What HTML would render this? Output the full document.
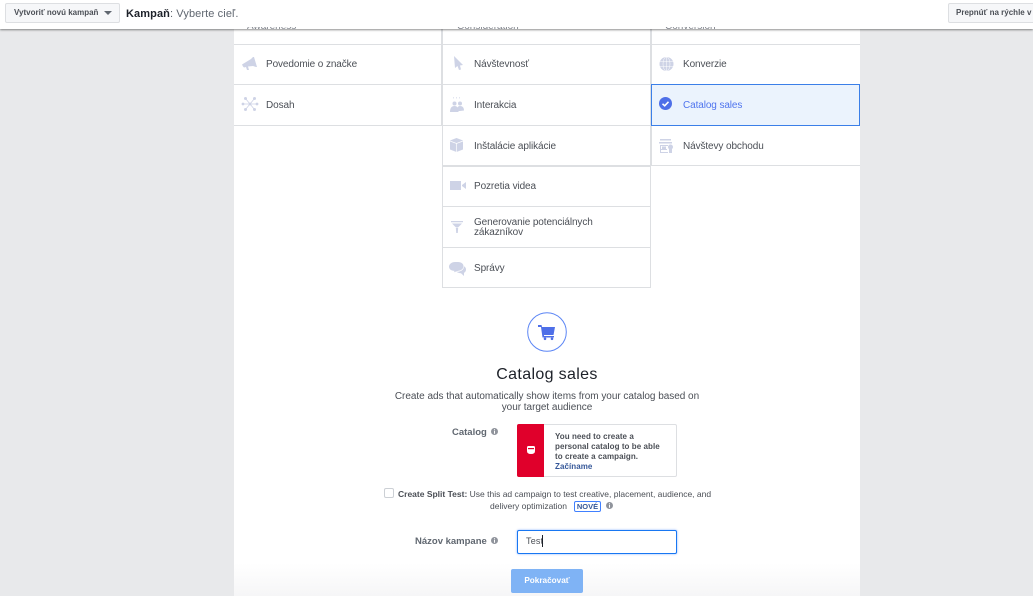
<!DOCTYPE html>
<html><head><meta charset="utf-8">
<style>
html,body{margin:0;padding:0;width:1033px;height:596px;overflow:hidden;background:#e8e9eb;font-family:"Liberation Sans",sans-serif;color:#4b4f56}
.a{position:absolute}
.t{position:absolute;font-size:10px;line-height:10px;letter-spacing:-.1px;color:#4b4f56;white-space:nowrap}
.h{position:absolute;background:#dddfe2;height:1px}
.v{position:absolute;background:#dddfe2;width:1px}
svg{position:absolute;overflow:visible}
</style></head><body>
<div class="a" style="left:234px;top:0;width:626px;height:596px;background:#fff"></div>
<div class="a" style="left:234px;top:563px;width:626px;height:33px;background:linear-gradient(#fff,#f6f6f7)"></div>

<!-- grid lines -->
<div class="h" style="left:234px;top:44px;width:626px"></div>
<div class="h" style="left:234px;top:84px;width:417px"></div>
<div class="h" style="left:234px;top:125px;width:417px"></div>
<div class="h" style="left:442px;top:165px;width:209px;height:2px"></div>
<div class="h" style="left:442px;top:206px;width:209px"></div>
<div class="h" style="left:442px;top:247px;width:209px"></div>
<div class="h" style="left:442px;top:287px;width:209px"></div>
<div class="h" style="left:651px;top:165px;width:209px"></div>
<div class="v" style="left:441px;top:29px;height:97px;width:2px"></div>
<div class="v" style="left:442px;top:126px;height:162px"></div>
<div class="v" style="left:650px;top:29px;height:137px;width:2px"></div>
<div class="v" style="left:650px;top:166px;height:122px"></div>

<!-- selected -->
<div class="a" style="left:651px;top:84px;width:207px;height:40px;background:#ebf3fd;border:1px solid #3b7fe8"></div>

<!-- labels -->
<div class="t" style="left:266px;top:60px">Povedomie o značke</div>
<div class="t" style="left:266px;top:101px">Dosah</div>
<div class="t" style="left:474px;top:60px">Návštevnosť</div>
<div class="t" style="left:474px;top:101px">Interakcia</div>
<div class="t" style="left:474px;top:142px">Inštalácie aplikácie</div>
<div class="t" style="left:474px;top:182px">Pozretia videa</div>
<div class="t" style="left:474px;top:218px">Generovanie potenciálnych<br>zákazníkov</div>
<div class="t" style="left:474px;top:264px">Správy</div>
<div class="t" style="left:683px;top:60px">Konverzie</div>
<div class="t" style="left:683px;top:101px;color:#4f74ee">Catalog sales</div>
<div class="t" style="left:683px;top:142px">Návštevy obchodu</div>

<!-- icons -->
<svg style="left:242px;top:57px" width="15" height="14" fill="#ced3e6"><path d="M0 7.500L9 2l2-2h1l3 10h-1l-3-1-5 .5 1 3.500H5L4 10l-2 .5-1-1z"/></svg>
<svg style="left:242px;top:96px" width="16" height="16" fill="#ced3e6" stroke="#ced3e6" stroke-width=".8"><path fill="none" d="M8 8L3.500 2.500M8 8l4.500-5.500M8 8L3.500 13.500M8 8l4.500 5.500M1 8h14"/><circle cx="3.500" cy="2.500" r="1.100"/><circle cx="12.500" cy="2.500" r="1.100"/><circle cx="3.500" cy="13.500" r="1.100"/><circle cx="12.500" cy="13.500" r="1.100"/><circle cx="1" cy="8" r="1"/><circle cx="15" cy="8" r="1"/><circle cx="8" cy="8" r="1"/></svg>
<svg style="left:454px;top:56px" width="9" height="14" fill="#ced3e6"><path d="M0 0L9 9l-3 .5L7 13.500l-2 .5-1.500-4L1 12z"/></svg>
<svg style="left:450px;top:97px" width="14" height="15" fill="#ced3e6"><circle cx="4.500" cy="6.500" r="2"/><circle cx="10" cy="6.500" r="2"/><path d="M0 15c0-4 1.500-6 4.500-6 1.500 0 2.500.5 3 1.500.5-1 1.200-1.500 2.500-1.500 2.500 0 4 1.500 4 4.500l-4 .5H8.500v1z"/><path d="M3 0h1v1.500H3zM6 0h1v1.500H6zM9 0h1v1.500H9z" opacity=".6"/></svg>
<svg style="left:450px;top:138px" width="13" height="14"><path d="M6.500 0L13 2.500v9L6.500 14 0 11.500v-9z" fill="#ced3e6"/><path d="M0 3l6.500 2.500L13 3M6.500 5.500V14" stroke="#fff" stroke-width=".7" fill="none"/></svg>
<svg style="left:450px;top:181px" width="16" height="9" fill="#ced3e6"><rect width="11" height="9"/><path d="M12 4l4-3v7l-4-3z"/></svg>
<svg style="left:451px;top:221px" width="12" height="12" fill="#ced3e6"><path d="M0 0h12v1.200H0zM1 2.500h10L7.500 6h-3zM4.800 6.500h2.400L6.800 12H5.200z"/></svg>
<svg style="left:449px;top:262px" width="17" height="14" viewBox="0 0 17 15" preserveAspectRatio="none" fill="#ced3e6"><path d="M6 0h3c3.500 0 5.500 2 5.500 4.500S12.500 9 9 9.500L5 11l.5-1.500C2 9.500 0 7.500 0 5S2.500 0 6 0z"/><path d="M15 4.500c1.500 1 2 2 2 3.500 0 2-1 3-2 3.500V15l-3-3c-2 0-3.500-.5-4.500-1.500 4 0 7.500-2 7.500-6z"/></svg>
<svg style="left:659px;top:57px" width="15" height="15"><circle cx="7.500" cy="7" r="7" fill="#ced3e6"/><g stroke="#fff" stroke-width=".5" fill="none"><path d="M0 4.500h15M0 9.500h15M7.500 0v14"/><ellipse cx="7.500" cy="7" rx="3.500" ry="7"/></g></svg>
<svg style="left:659px;top:97px" width="13" height="13"><circle cx="6.500" cy="6.500" r="6.500" fill="#4e6fe8"/><path d="M3.500 6.800l2.200 2 3.800-4" stroke="#fff" stroke-width="1.600" fill="none"/></svg>
<svg style="left:659px;top:139px" width="15" height="14" fill="#ced3e6"><path d="M1 0h11v1.500H1zM0 3h13v1.500H0zM1 6h8v1H2v3h6v1H2v2h7v1H1z"/><rect x="3" y="7.500" width="4" height="2.500"/><circle cx="11.500" cy="8" r="2.500"/><rect x="10" y="10" width="3" height="4"/></svg>

<!-- header -->
<div class="a" style="left:0;top:0;width:1033px;height:29px;background:#fff;box-shadow:0 1px 2px rgba(0,0,0,.45)"></div>
<div class="a" style="left:5px;top:3px;width:113px;height:18px;background:#f6f7f9;border:1px solid #dddfe2;border-radius:2px"></div>
<div class="t" style="left:14px;top:8px;font-size:8px;letter-spacing:0;font-weight:bold;color:#4b4f56">Vytvoriť novú kampaň</div>
<div class="a" style="left:104px;top:11px;width:0;height:0;border-left:4px solid transparent;border-right:4px solid transparent;border-top:4px solid #606770"></div>
<div class="t" style="left:126px;top:8px;font-size:11px;line-height:13px;letter-spacing:.1px;color:#606770"><b style="color:#1d2129">Kampaň</b>: Vyberte cieľ.</div>
<div class="a" style="left:948px;top:3px;width:90px;height:18px;background:#f6f7f9;border:1px solid #dddfe2;border-radius:2px"></div>
<div class="t" style="left:956px;top:8px;font-size:8px;letter-spacing:0;font-weight:bold;color:#4b4f56">Prepnúť na rýchle v</div>

<!-- clipped headings -->
<div class="t" style="left:247px;top:22px;color:#80848c;letter-spacing:0;clip-path:inset(5px 0 0 0)">Awareness</div>
<div class="t" style="left:457px;top:22px;color:#80848c;letter-spacing:0;clip-path:inset(5px 0 0 0)">Consideration</div>
<div class="t" style="left:665px;top:22px;color:#80848c;letter-spacing:0;clip-path:inset(5px 0 0 0)">Conversion</div>

<!-- info block -->
<svg style="left:527px;top:312px" width="40" height="40"><circle cx="20" cy="20" r="19.300" fill="#fff" stroke="#5b85f5" stroke-width="1"/><path d="M11 13h3.500l.5 2h13l-1.500 8H17v1h10v1.500H15.500L14 15h-3z" fill="#4e6fe8"/><circle cx="18" cy="26.800" r="1.300" fill="#4e6fe8"/><circle cx="25" cy="26.800" r="1.300" fill="#4e6fe8"/></svg>
<div class="a" style="left:234px;top:365px;width:626px;text-align:center;font-size:16px;line-height:19px;letter-spacing:.35px;color:#1d2129">Catalog sales</div>
<div class="a" style="left:234px;top:391px;width:626px;text-align:center;font-size:10px;line-height:11px;letter-spacing:-.03px;color:#4b4f56">Create ads that automatically show items from your catalog based on<br><span style="line-height:12px">your target audience</span></div>

<div class="t" style="left:452px;top:428px;font-size:9.500px;letter-spacing:0;font-weight:bold;color:#606770">Catalog</div>
<svg style="left:491px;top:428px" width="8" height="8"><circle cx="3.500" cy="3.500" r="3.500" fill="#90949c"/><path d="M3 1.200h1v1H3zM3 2.900h1v2.900H3z" fill="#fff"/></svg>
<div class="a" style="left:517px;top:424px;width:158px;height:51px;border:1px solid #dddfe2;border-radius:2px;background:#fff"></div>
<div class="a" style="left:517px;top:424px;width:27px;height:53px;background:#e0002b;border-radius:2px 0 0 2px"></div>
<svg style="left:527px;top:446px" width="8" height="8"><path d="M0 1.500Q0 0 1.500 0h5Q8 0 8 1.500V5Q8 8 4 8T0 5z" fill="#fff"/><rect x="1" y="2" width="6" height="1.200" fill="#e0002b"/></svg>
<div class="t" style="left:555px;top:432px;font-size:8px;line-height:10px;letter-spacing:.06px;font-weight:bold;color:#4b4f56">You need to create a<br>personal catalog to be able<br>to create a campaign.<br><span style="color:#365899">Začíname</span></div>

<div class="a" style="left:384px;top:488px;width:8px;height:8px;border:1px solid #ccd0d5;border-radius:2px;background:#fff"></div>
<div class="t" style="left:398px;top:489px;font-size:8.500px;letter-spacing:0;color:#4b4f56"><b>Create Split Test:</b> Use this ad campaign to test creative, placement, audience, and</div>
<div class="t" style="left:490px;top:501px;font-size:8.500px;letter-spacing:0;color:#4b4f56">delivery optimization</div>
<div class="a" style="left:574px;top:501px;width:25px;height:9px;border:1px solid #4080ff;border-radius:2px;text-align:center;font-size:7.500px;line-height:9px;font-weight:bold;color:#365899;letter-spacing:0">NOVÉ</div>
<svg style="left:606px;top:502px" width="8" height="8"><circle cx="3.500" cy="3.500" r="3.500" fill="#90949c"/><path d="M3 1.200h1v1H3zM3 2.900h1v2.900H3z" fill="#fff"/></svg>

<div class="t" style="left:415px;top:537px;font-size:9.500px;letter-spacing:0;font-weight:bold;color:#606770">Názov kampane</div>
<svg style="left:491px;top:537px" width="8" height="8"><circle cx="3.500" cy="3.500" r="3.500" fill="#90949c"/><path d="M3 1.200h1v1H3zM3 2.900h1v2.900H3z" fill="#fff"/></svg>
<div class="a" style="left:517px;top:530px;width:158px;height:22px;border:1px solid #1877f2;border-radius:2px;background:#fff;box-shadow:0 0 2px rgba(64,128,255,.6)"></div>
<div class="t" style="left:526px;top:536px;font-size:9px;letter-spacing:.2px;color:#4b4f56">Test</div>
<div class="a" style="left:542px;top:535px;width:1px;height:12px;background:#1d2129"></div>

<div class="a" style="left:511px;top:569px;width:72px;height:24px;background:#7fb3f5;border-radius:2px;text-align:center;font-size:8.200px;line-height:24px;font-weight:bold;color:#fff;letter-spacing:0">Pokračovať</div>
</body></html>
